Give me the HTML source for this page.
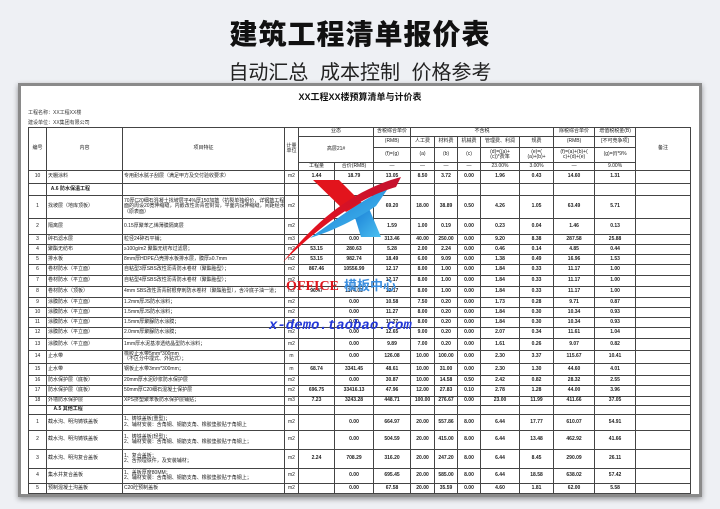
<!DOCTYPE html>
<html><head><meta charset="utf-8">
<style>
*{margin:0;padding:0;box-sizing:border-box}
body{width:720px;height:509px;background:#eef0f4;position:relative;overflow:hidden;font-family:"Liberation Sans","Noto Sans CJK SC",sans-serif}
.t1{position:absolute;top:13px;left:0;width:720px;text-align:center;font-size:28px;font-weight:900;color:#111;letter-spacing:1px}
.t2{position:absolute;top:56px;left:0;width:720px;text-align:center;font-size:20px;color:#222;word-spacing:6px}
.paper{position:absolute;left:18px;top:83px;width:684px;height:414px;background:#fff;border:3px solid #8a8a8a;box-shadow:0 2px 5px rgba(0,0,0,.4)}
.pt{position:absolute;top:90px;left:0;width:720px;text-align:center;font-size:9px;font-weight:bold;color:#111}
.info{position:absolute;left:28px;font-size:5px;color:#333}
table{position:absolute;left:28px;top:127px;width:662px;border-collapse:collapse;table-layout:fixed;font-size:5px;color:#222}
td{border:1px solid #444;padding:0 1px;text-align:center;line-height:5.5px;overflow:hidden;white-space:nowrap}
td.l{text-align:left}
td.n{font-weight:bold}
tr.sec td{font-weight:bold}
</style></head><body>
<div class="t1">建筑工程清单报价表</div>
<div class="t2">自动汇总 成本控制 价格参考</div>
<div class="paper"></div>
<div class="pt">XX工程XX楼预算清单与计价表</div>
<div class="info" style="top:109px">工程名称：XX工程XX楼</div>
<div class="info" style="top:119px">建设单位：XX集团有限公司</div>
<table>
<colgroup><col style="width:18px"><col style="width:76px"><col style="width:162px"><col style="width:14px"><col style="width:36px"><col style="width:39px"><col style="width:37px"><col style="width:24px"><col style="width:23px"><col style="width:23px"><col style="width:39px"><col style="width:34px"><col style="width:41px"><col style="width:41px"><col style="width:55px"></colgroup>
<tr style="height:9px"><td rowspan="4">编号</td><td rowspan="4">内容</td><td rowspan="4">项目特征</td><td rowspan="4">计量<br>单位</td><td colspan="2">业态</td><td>含税综合单价</td><td colspan="5">不含税</td><td>除税综合单价</td><td>增值税税金(B)</td><td rowspan="4">备注</td></tr>
<tr style="height:11px"><td colspan="2" rowspan="2">高层21#</td><td>(RMB)</td><td>人工费</td><td>材料费</td><td>机械费</td><td>管理费、利润</td><td>规费</td><td>(RMB)</td><td>[不可竞争项]</td></tr>
<tr style="height:15px"><td>(f)=(g)</td><td>(a)</td><td>(b)</td><td>(c)</td><td>(d)=((a)+<br>(c))*费率</td><td>(e)=(<br>(a)+(b)+</td><td>(f)=(a)+(b)+(<br>c)+(d)+(e)</td><td>(g)=(f)*9%</td></tr>
<tr style="height:8px"><td>工程量</td><td>合价(RMB)</td><td>—</td><td>—</td><td>—</td><td>—</td><td>23.00%</td><td>3.00%</td><td>—</td><td>9.00%</td></tr>
<tr style="height:13px"><td>10</td><td class="l">天棚涂料</td><td class="l">专用耐水腻子刮层（满足甲方及交付验收要求）</td><td>m2</td><td class="n">1.44</td><td class="n">18.79</td><td class="n">13.05</td><td class="n">8.50</td><td class="n">3.72</td><td class="n">0.00</td><td class="n">1.96</td><td class="n">0.43</td><td class="n">14.60</td><td class="n">1.31</td><td></td></tr>
<tr class="sec" style="height:12px"><td></td><td class="l">&nbsp;&nbsp;A.6 防水保温工程</td><td></td><td></td><td></td><td></td><td></td><td></td><td></td><td></td><td></td><td></td><td></td><td></td><td></td></tr>
<tr style="height:23px"><td>1</td><td class="l">找坡层（地库顶板）</td><td class="l">70厚C20细石混凝土找坡层平4%厚150加筋（抗裂单独组价，详钢筋工程），平<br>面的周设20宽伸缩缝，内嵌改性沥青密封膏，平面内设伸缩缝，间距经水老成<br>（原表面）</td><td>m2</td><td></td><td></td><td class="n">69.20</td><td class="n">18.00</td><td class="n">38.89</td><td class="n">0.50</td><td class="n">4.26</td><td class="n">1.05</td><td class="n">63.49</td><td class="n">5.71</td><td></td></tr>
<tr style="height:16px"><td>2</td><td class="l">隔离层</td><td class="l">0.15厚聚苯乙烯薄膜隔离层</td><td>m2</td><td></td><td></td><td class="n">1.59</td><td class="n">1.00</td><td class="n">0.19</td><td class="n">0.00</td><td class="n">0.23</td><td class="n">0.04</td><td class="n">1.46</td><td class="n">0.13</td><td></td></tr>
<tr style="height:10px"><td>3</td><td class="l">碎石滤水层</td><td class="l">粒径24碎石平铺；</td><td>m3</td><td></td><td class="n">0.00</td><td class="n">313.46</td><td class="n">40.00</td><td class="n">250.00</td><td class="n">0.00</td><td class="n">9.20</td><td class="n">8.38</td><td class="n">287.58</td><td class="n">25.88</td><td></td></tr>
<tr style="height:10px"><td>4</td><td class="l">聚酯无纺布</td><td class="l">≥100g/m2 聚酯无纺布过滤层；</td><td>m2</td><td class="n">53.15</td><td class="n">280.63</td><td class="n">5.28</td><td class="n">2.00</td><td class="n">2.24</td><td class="n">0.00</td><td class="n">0.46</td><td class="n">0.14</td><td class="n">4.85</td><td class="n">0.44</td><td></td></tr>
<tr style="height:10px"><td>5</td><td class="l">排水板</td><td class="l">8mm厚HDPE凸壳排水板排水层，膜厚≥0.7mm</td><td>m2</td><td class="n">53.15</td><td class="n">982.74</td><td class="n">18.49</td><td class="n">6.00</td><td class="n">9.09</td><td class="n">0.00</td><td class="n">1.38</td><td class="n">0.49</td><td class="n">16.96</td><td class="n">1.53</td><td></td></tr>
<tr style="height:11px"><td>6</td><td class="l">卷材防水（平立面）</td><td class="l">自粘型3厚SBS改性沥青防水卷材（聚酯胎型）；</td><td>m2</td><td class="n">867.46</td><td class="n">10556.99</td><td class="n">12.17</td><td class="n">8.00</td><td class="n">1.00</td><td class="n">0.00</td><td class="n">1.84</td><td class="n">0.33</td><td class="n">11.17</td><td class="n">1.00</td><td></td></tr>
<tr style="height:11px"><td>7</td><td class="l">卷材防水（平立面）</td><td class="l">自粘型4厚SBS改性沥青防水卷材（聚酯胎型）；</td><td>m2</td><td></td><td></td><td class="n">12.17</td><td class="n">8.00</td><td class="n">1.00</td><td class="n">0.00</td><td class="n">1.84</td><td class="n">0.33</td><td class="n">11.17</td><td class="n">1.00</td><td></td></tr>
<tr style="height:11px"><td>8</td><td class="l">卷材防水（顶板）</td><td class="l">4mm SBS改性沥青耐根穿刺防水卷材（聚酯胎型），含冷底子油一道；</td><td>m2</td><td class="n">96.47</td><td class="n">1174.03</td><td class="n">12.17</td><td class="n">8.00</td><td class="n">1.00</td><td class="n">0.00</td><td class="n">1.84</td><td class="n">0.33</td><td class="n">11.17</td><td class="n">1.00</td><td></td></tr>
<tr style="height:10px"><td>9</td><td class="l">涂膜防水（平立面）</td><td class="l">1.2mm厚JS防水涂料；</td><td>m2</td><td></td><td class="n">0.00</td><td class="n">10.58</td><td class="n">7.50</td><td class="n">0.20</td><td class="n">0.00</td><td class="n">1.73</td><td class="n">0.28</td><td class="n">9.71</td><td class="n">0.87</td><td></td></tr>
<tr style="height:10px"><td>10</td><td class="l">涂膜防水（平立面）</td><td class="l">1.5mm厚JS防水涂料；</td><td>m2</td><td></td><td class="n">0.00</td><td class="n">11.27</td><td class="n">8.00</td><td class="n">0.20</td><td class="n">0.00</td><td class="n">1.84</td><td class="n">0.30</td><td class="n">10.34</td><td class="n">0.93</td><td></td></tr>
<tr style="height:10px"><td>11</td><td class="l">涂膜防水（平立面）</td><td class="l">1.5mm厚聚脲防水涂膜；</td><td>m2</td><td></td><td class="n">0.00</td><td class="n">11.27</td><td class="n">8.00</td><td class="n">0.20</td><td class="n">0.00</td><td class="n">1.84</td><td class="n">0.30</td><td class="n">10.34</td><td class="n">0.93</td><td></td></tr>
<tr style="height:11px"><td>12</td><td class="l">涂膜防水（平立面）</td><td class="l">2.0mm厚聚脲防水涂膜；</td><td>m2</td><td></td><td class="n">0.00</td><td class="n">12.65</td><td class="n">9.00</td><td class="n">0.20</td><td class="n">0.00</td><td class="n">2.07</td><td class="n">0.34</td><td class="n">11.61</td><td class="n">1.04</td><td></td></tr>
<tr style="height:12px"><td>13</td><td class="l">涂膜防水（平立面）</td><td class="l">1mm厚水泥基渗透结晶型防水涂料；</td><td>m2</td><td></td><td class="n">0.00</td><td class="n">9.89</td><td class="n">7.00</td><td class="n">0.20</td><td class="n">0.00</td><td class="n">1.61</td><td class="n">0.26</td><td class="n">9.07</td><td class="n">0.82</td><td></td></tr>
<tr style="height:13px"><td>14</td><td class="l">止水带</td><td class="l">橡胶止水带5mm*300mm<br>（不区分中埋式、外贴式）；</td><td>m</td><td></td><td class="n">0.00</td><td class="n">126.08</td><td class="n">10.00</td><td class="n">100.00</td><td class="n">0.00</td><td class="n">2.30</td><td class="n">3.37</td><td class="n">115.67</td><td class="n">10.41</td><td></td></tr>
<tr style="height:12px"><td>15</td><td class="l">止水带</td><td class="l">钢板止水带3mm*300mm；</td><td>m</td><td class="n">68.74</td><td class="n">3341.45</td><td class="n">48.61</td><td class="n">10.00</td><td class="n">31.00</td><td class="n">0.00</td><td class="n">2.30</td><td class="n">1.30</td><td class="n">44.60</td><td class="n">4.01</td><td></td></tr>
<tr style="height:10px"><td>16</td><td class="l">防水保护层（底板）</td><td class="l">20mm厚水泥砂浆防水保护层</td><td>m2</td><td></td><td class="n">0.00</td><td class="n">30.87</td><td class="n">10.00</td><td class="n">14.58</td><td class="n">0.50</td><td class="n">2.42</td><td class="n">0.82</td><td class="n">28.32</td><td class="n">2.55</td><td></td></tr>
<tr style="height:11px"><td>17</td><td class="l">防水保护层（底板）</td><td class="l">50mm厚C20细石混凝土保护层</td><td>m2</td><td class="n">696.75</td><td class="n">33416.13</td><td class="n">47.96</td><td class="n">12.00</td><td class="n">27.83</td><td class="n">0.10</td><td class="n">2.78</td><td class="n">1.28</td><td class="n">44.00</td><td class="n">3.96</td><td></td></tr>
<tr style="height:9px"><td>18</td><td class="l">外墙防水保护层</td><td class="l">XPS挤塑聚苯板防水保护层铺贴；</td><td>m3</td><td class="n">7.23</td><td class="n">3243.28</td><td class="n">448.71</td><td class="n">100.00</td><td class="n">276.67</td><td class="n">0.00</td><td class="n">23.00</td><td class="n">11.99</td><td class="n">411.66</td><td class="n">37.05</td><td></td></tr>
<tr class="sec" style="height:9px"><td></td><td class="l">&nbsp;&nbsp;&nbsp;&nbsp;A.5 其他工程</td><td></td><td></td><td></td><td></td><td></td><td></td><td></td><td></td><td></td><td></td><td></td><td></td><td></td></tr>
<tr style="height:16px"><td>1</td><td class="l">截水沟、明沟铸铁盖板</td><td class="l">1、铸铁盖板(重型)；<br>2、辅材安装：含角钢、钢筋支角、橡胶垫胶贴于角钢上</td><td>m2</td><td></td><td class="n">0.00</td><td class="n">664.97</td><td class="n">20.00</td><td class="n">557.86</td><td class="n">8.00</td><td class="n">6.44</td><td class="n">17.77</td><td class="n">610.07</td><td class="n">54.91</td><td></td></tr>
<tr style="height:19px"><td>2</td><td class="l">截水沟、明沟铸铁盖板</td><td class="l">1、铸铁盖板(轻型)；<br>2、辅材安装：含角钢、钢筋支角、橡胶垫胶贴于角钢上；</td><td>m2</td><td></td><td class="n">0.00</td><td class="n">504.59</td><td class="n">20.00</td><td class="n">415.00</td><td class="n">8.00</td><td class="n">6.44</td><td class="n">13.48</td><td class="n">462.92</td><td class="n">41.66</td><td></td></tr>
<tr style="height:19px"><td>3</td><td class="l">截水沟、明沟复合盖板</td><td class="l">1、复合盖板；<br>2、含预埋铁件，及安装辅材；</td><td>m2</td><td class="n">2.24</td><td class="n">708.29</td><td class="n">316.20</td><td class="n">20.00</td><td class="n">247.20</td><td class="n">8.00</td><td class="n">6.44</td><td class="n">8.45</td><td class="n">290.09</td><td class="n">26.11</td><td></td></tr>
<tr style="height:15px"><td>4</td><td class="l">集水井复合盖板</td><td class="l">1、盖板厚度80MM；<br>2、辅材安装：含角钢、钢筋支角、橡胶垫胶贴于角钢上；</td><td>m2</td><td></td><td class="n">0.00</td><td class="n">695.45</td><td class="n">20.00</td><td class="n">585.00</td><td class="n">8.00</td><td class="n">6.44</td><td class="n">18.58</td><td class="n">638.02</td><td class="n">57.42</td><td></td></tr>
<tr style="height:10px"><td>5</td><td class="l">预制混凝土沟盖板</td><td class="l">C20砼预制盖板</td><td>m2</td><td></td><td class="n">0.00</td><td class="n">67.58</td><td class="n">20.00</td><td class="n">35.59</td><td class="n">0.00</td><td class="n">4.60</td><td class="n">1.81</td><td class="n">62.00</td><td class="n">5.58</td><td></td></tr>
</table>
<svg style="position:absolute;left:0;top:0" width="720" height="509">
<defs>
<linearGradient id="r" x1="0" y1="1" x2="1" y2="0"><stop offset="0" stop-color="#ee1118"/><stop offset="1" stop-color="#c41230"/></linearGradient>
<linearGradient id="b" x1="0" y1="0" x2="1" y2="1"><stop offset="0" stop-color="#1479d4"/><stop offset="1" stop-color="#4cc0f0"/></linearGradient>
</defs>
<path d="M313 180 L339 180 L362 203 L346 212 Z" fill="#e2141c"/>
<path d="M352 208 L368 206 L381 237 L361 237 Z" fill="url(#b)"/>
<path d="M310 238 C335 220 362 200 389 187 L376 206 C355 220 335 230 310 238 Z" fill="url(#b)"/>
<path d="M283 262 C315 222 352 190 401 177 L396 187 C358 198 320 226 283 262 Z" fill="url(#r)"/>
<text x="286" y="290" font-family="Liberation Serif,serif" font-weight="bold" font-size="14" fill="#e0161d">OFFICE</text>
<text x="344" y="290" font-family="Noto Sans CJK SC,sans-serif" font-weight="bold" font-size="13" fill="#3a8ee0">模板中心</text>
<text x="269" y="329" font-family="Liberation Mono,monospace" font-weight="bold" font-style="italic" font-size="14" fill="#2338d8">x-demo.taobao.com</text>
</svg>
</body></html>
